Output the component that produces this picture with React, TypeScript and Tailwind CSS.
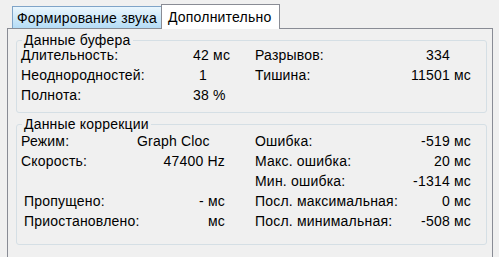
const font = { fontFamily: '"Liberation Sans", Arial, sans-serif' };

function Line({ label, value, cls = "" }: { label: string; value: string; cls?: string }) {
  return (
    <div className="flex justify-between whitespace-nowrap">
      <span>{label}</span>
      <span className={cls}>{value}</span>
    </div>
  );
}

export default function App() {
  return (
    <div className="w-[499px] h-[257px] bg-[#f0f0f0] text-black text-[14px] tracking-[0.2px] overflow-hidden" style={font}>
      {/* tabs */}
      <div className="flex items-end h-[28px] pl-[12px]">
        <div className="h-[22px] w-[150px] border border-b-0 border-[#7fa4c8] bg-gradient-to-b from-[#eaf6fd] to-[#b4dcf6] flex items-center pl-[4px] leading-[14px] whitespace-nowrap">
          Формирование звука
        </div>
        <div className="h-[25px] w-[119px] -ml-[1px] -mb-[1px] relative z-10 border border-b-0 border-[#898c95] bg-white flex items-center pl-[6px] leading-[14px]">
          Дополнительно
        </div>
      </div>

      {/* tab pane */}
      <div className="ml-[7px] w-[486px] h-[240px] border border-[#898c95] pt-[5px] pl-[8px]">
        <fieldset className="w-[471px] border border-[#d5dfe5] rounded-[3px] pl-[4px] pb-[10px]">
          <legend className="ml-[1px] px-[2px] leading-[12px]">Данные буфера</legend>
          <div className="grid grid-cols-[116px_88px_30px_216px] gap-y-[6px] pt-[2px] leading-[14px] whitespace-nowrap">
            <span>Длительность:</span>
            <span className="pl-[56px]">42 мс</span>
            <span />
            <Line label="Разрывов:" value="334" cls="pr-[21px]" />

            <span>Неоднородностей:</span>
            <span className="pl-[62px]">1</span>
            <span />
            <Line label="Тишина:" value="11501 мс" />

            <span>Полнота:</span>
            <span className="pl-[56px]">38 %</span>
            <span />
            <span />
          </div>
        </fieldset>

        <fieldset className="mt-[5px] w-[471px] border border-[#d5dfe5] rounded-[3px] pl-[4px] pt-[4px] pb-[16px]">
          <legend className="ml-[1px] px-[2px] leading-[12px]">Данные коррекции</legend>
          <div className="grid grid-cols-[116px_88px_30px_216px] gap-y-[6px] leading-[14px] whitespace-nowrap">
            <span>Режим:</span>
            <span>Graph Cloc</span>
            <span />
            <Line label="Ошибка:" value="-519 мс" />

            <span>Скорость:</span>
            <span className="flex justify-end">47400 Hz</span>
            <span />
            <Line label="Макс. ошибка:" value="20 мс" />

            <span />
            <span />
            <span />
            <Line label="Мин. ошибка:" value="-1314 мс" />

            <span className="pl-[3px]">Пропущено:</span>
            <span className="flex justify-end">- мс</span>
            <span />
            <Line label="Посл. максимальная:" value="0 мс" />

            <span className="pl-[3px]">Приостановлено:</span>
            <span className="flex justify-end">мс</span>
            <span />
            <Line label="Посл. минимальная:" value="-508 мс" />
          </div>
        </fieldset>
      </div>
    </div>
  );
}
